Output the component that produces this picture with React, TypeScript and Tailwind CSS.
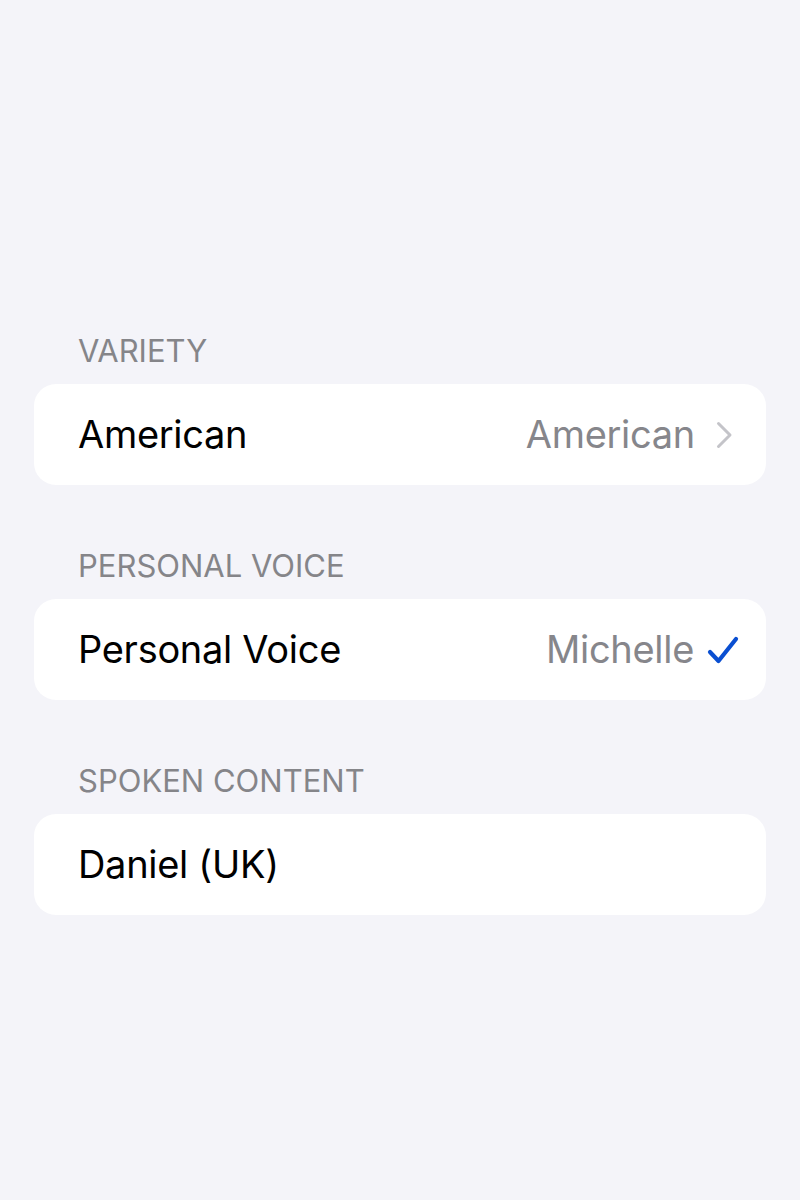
type Row = {
  title: string;
  label: string;
  value?: string;
  accessory?: 'chevron' | 'check';
};

const sections: Row[] = [
  { title: 'VARIETY', label: 'American', value: 'American', accessory: 'chevron' },
  { title: 'PERSONAL VOICE', label: 'Personal Voice', value: 'Michelle', accessory: 'check' },
  { title: 'SPOKEN CONTENT', label: 'Daniel (UK)' },
];

const Chevron = () => (
  <svg width="17" height="28" viewBox="0 0 17 28" fill="none" className="ml-[21px] mr-[6px]">
    <path
      d="M2.5 2.5 L14 14 L2.5 25.5"
      stroke="#c4c4c9"
      strokeWidth="3"
      strokeLinecap="round"
      strokeLinejoin="round"
    />
  </svg>
);

const Check = () => (
  <svg width="32" height="30" viewBox="0 0 32 30" fill="none" className="ml-[13px]">
    <path
      d="M3 17 L11.5 26 L29 4"
      stroke="#0a4fd1"
      strokeWidth="4.2"
      strokeLinecap="round"
      strokeLinejoin="round"
    />
  </svg>
);

const App = () => {
  return (
    <div
      className="min-h-[1200px] w-full bg-[#f4f4f9] px-[34px] pt-[334px]"
      style={{ fontFamily: 'Inter, "Noto Sans", sans-serif' }}
    >
      {sections.map((s) => (
        <section key={s.title} className="mb-[64px]">
          {/* group header */}
          <h2 className="pl-[44px] text-[31px] leading-[34px] text-[#858589] mb-[16px]">
            {s.title}
          </h2>
          <div className="h-[101px] rounded-[22px] bg-white pl-[44px] pr-[27px] flex items-center justify-between">
            <span className="text-[38px] text-black tracking-[-0.3px]">{s.label}</span>
            {s.value && (
              <div className="flex items-center">
                <span className="text-[38px] text-[#86868b] tracking-[-0.3px]">{s.value}</span>
                {s.accessory === 'chevron' && <Chevron />}
                {s.accessory === 'check' && <Check />}
              </div>
            )}
          </div>
        </section>
      ))}
    </div>
  );
};

export default App;
